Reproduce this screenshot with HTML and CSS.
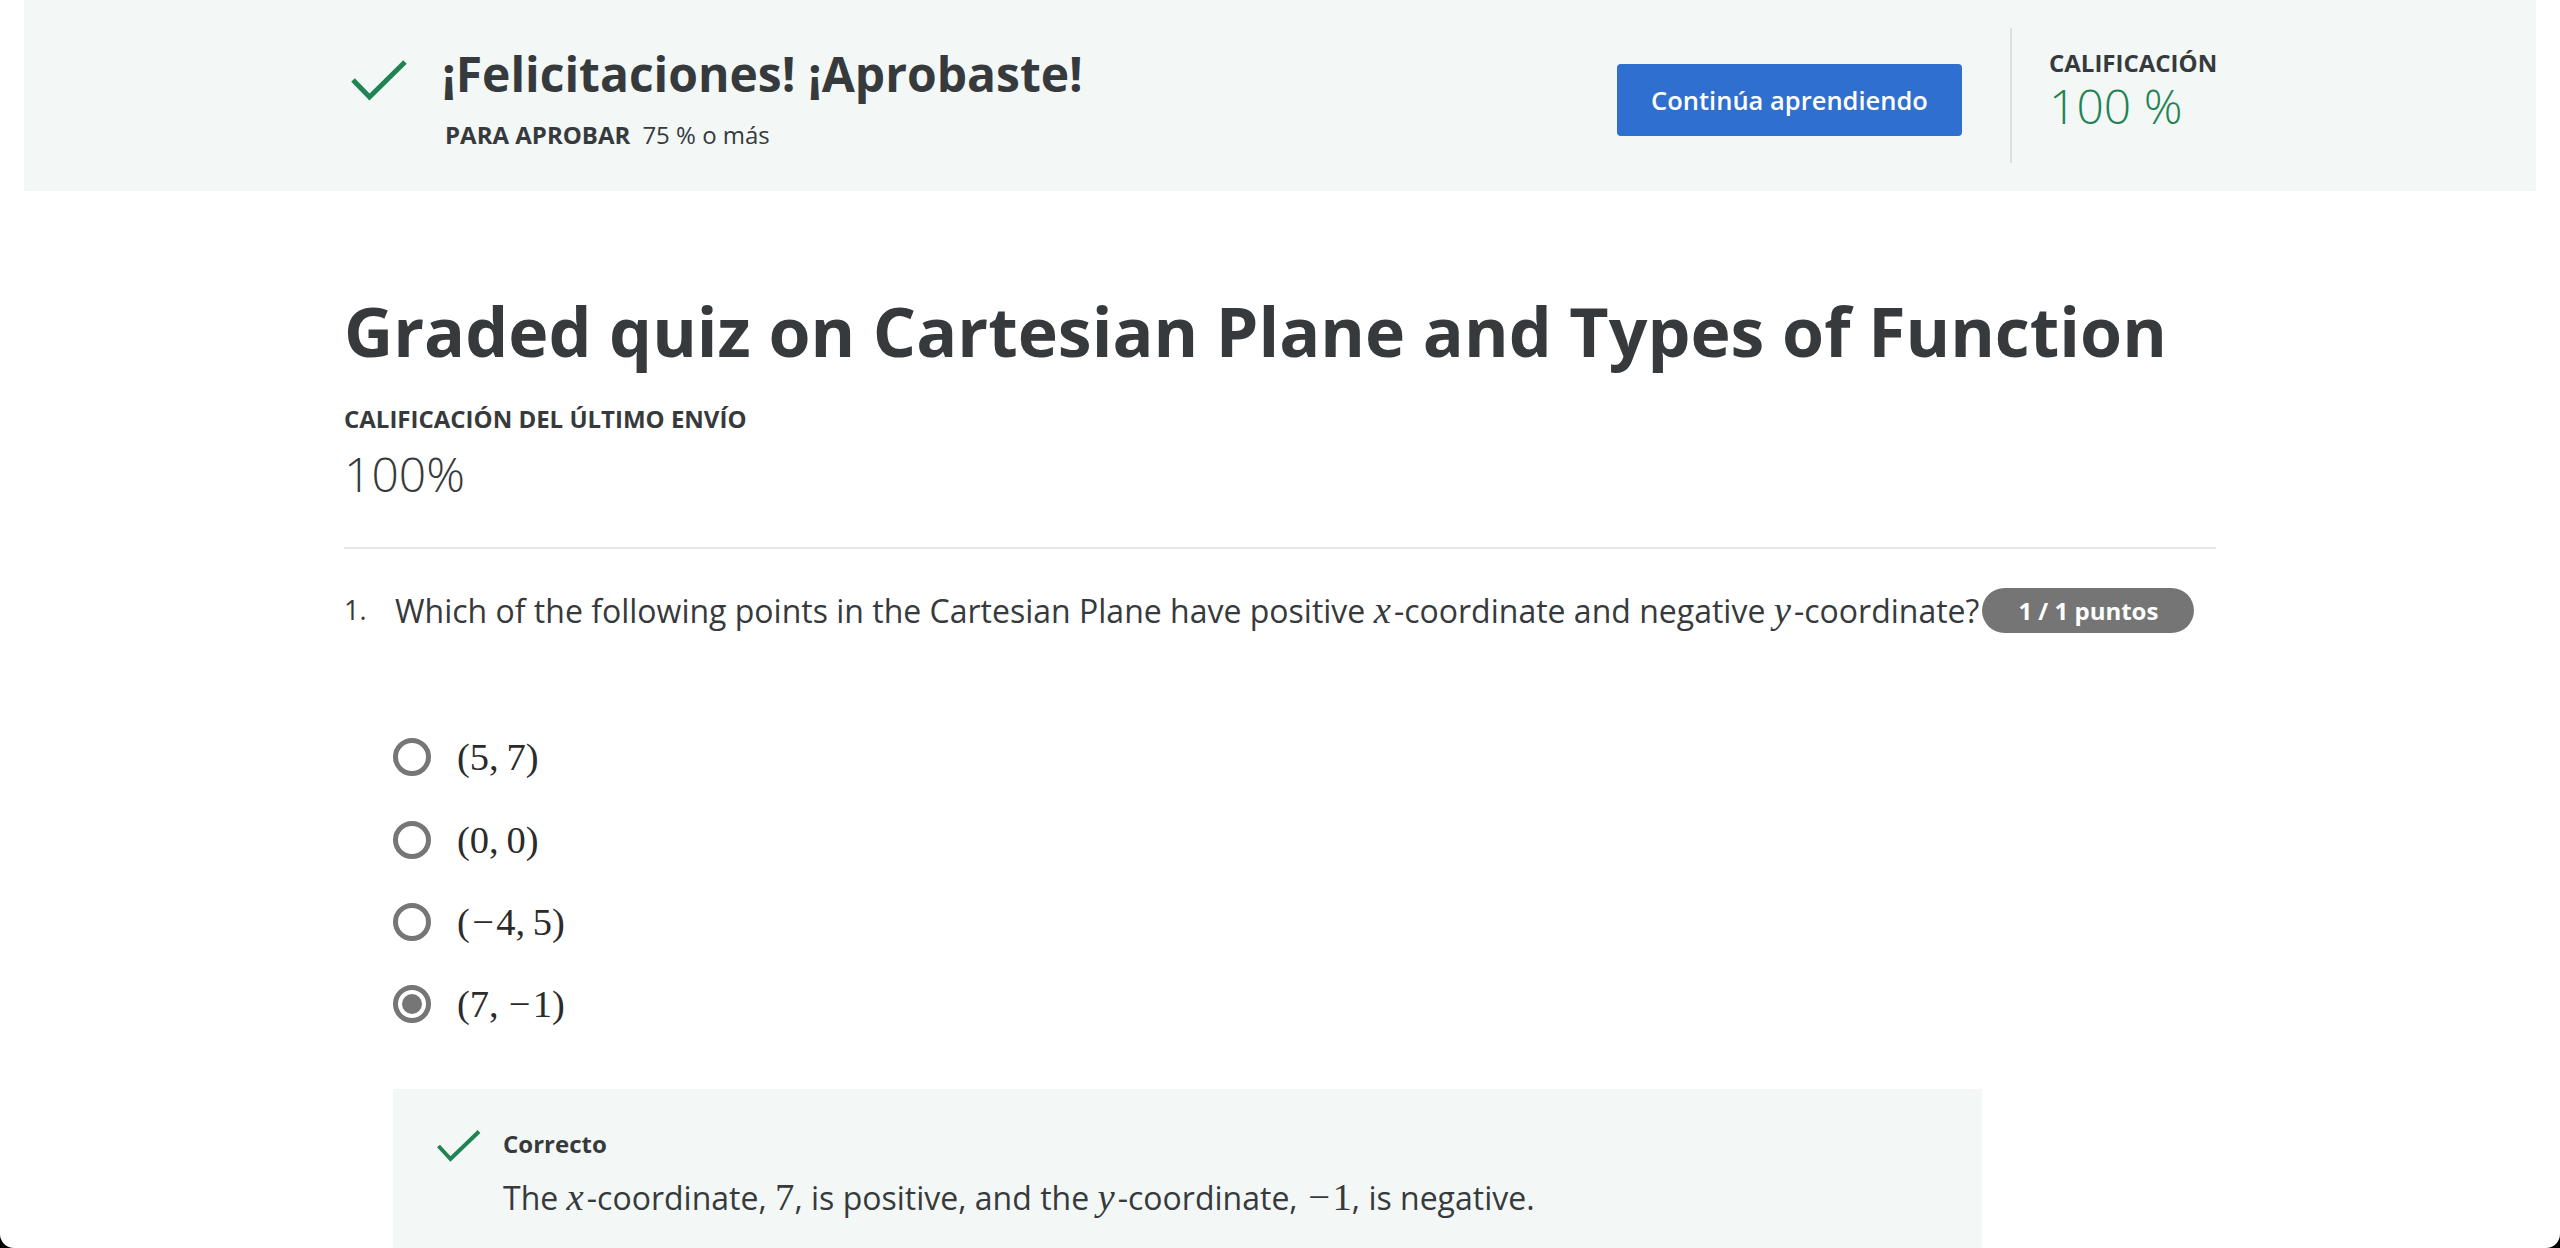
FILE: index.html
```html
<!DOCTYPE html>
<html lang="es">
<head>
<meta charset="utf-8">
<title>Graded quiz on Cartesian Plane and Types of Function</title>
<link rel="stylesheet" href="styles.css">
</head>
<body>
<div class="page">
  <header class="banner">
    <div class="banner-inner">
      <div class="pass">
        <svg class="pass-check" viewBox="0 0 56 42" width="56" height="42" aria-hidden="true">
          <polyline points="2,21 18.5,38 54,3" fill="none" stroke="#1f8354" stroke-width="5"/>
        </svg>
        <div class="pass-text">
          <h2 class="pass-title">¡Felicitaciones! ¡Aprobaste!</h2>
          <div class="pass-sub"><span class="pass-label">PARA APROBAR</span><span class="pass-value">75 % o más</span></div>
        </div>
      </div>
      <button class="btn-primary">Continúa aprendiendo</button>
      <div class="vdivider"></div>
      <div class="grade">
        <div class="grade-label">CALIFICACIÓN</div>
        <div class="grade-value">100 %</div>
      </div>
    </div>
  </header>

  <main class="main">
    <h1 class="quiz-title">Graded quiz on Cartesian Plane and Types of Function</h1>
    <div class="last-label">CALIFICACIÓN DEL ÚLTIMO ENVÍO</div>
    <div class="last-value">100%</div>
    <hr class="hdivider">

    <div class="question">
      <div class="q-num">1.</div>
      <div class="q-text">Which of the following points in the Cartesian Plane have positive <span class="mi">x</span>-coordinate and negative <span class="mi">y</span>-coordinate?</div>
      <div class="badge">1 / 1 puntos</div>
    </div>

    <div class="options">
      <div class="option"><span class="radio"></span><span class="math">(5,&thinsp;7)</span></div>
      <div class="option"><span class="radio"></span><span class="math">(0,&thinsp;0)</span></div>
      <div class="option"><span class="radio"></span><span class="math">(<span class="minus">−</span>4,&thinsp;5)</span></div>
      <div class="option"><span class="radio checked"></span><span class="math">(7,&thinsp;<span class="minus">−</span>1)</span></div>
    </div>

    <div class="feedback">
      <svg class="fb-check" viewBox="0 0 44 32" width="44" height="32" aria-hidden="true">
        <polyline points="1.5,16 13.5,29 42,1.5" fill="none" stroke="#1f8354" stroke-width="4"/>
      </svg>
      <div class="fb-body">
        <div class="fb-title">Correcto</div>
        <div class="fb-text">The <span class="mi">x</span>-coordinate, <span class="mn">7</span>, is positive, and the <span class="mi">y</span>-coordinate, <span class="mn"><span class="minus">−</span>1</span>, is negative.</div>
      </div>
    </div>
  </main>
</div>
</body>
</html>
```

FILE: styles.css
```css
html, body {
  margin: 0;
  padding: 0;
  background: #000;
}

body {
  font-family: "Open Sans", "Noto Sans", sans-serif;
  color: #373a3c;
}

.page {
  width: 2560px;
  height: 1248px;
  background: #fff;
  border-radius: 0 0 14px 14px;
  overflow: hidden;
}

/* ---------- banner ---------- */
.banner {
  margin: 0 24px;
  height: 191px;
  background: #f3f8f6;
}

.banner-inner {
  width: 1872px;
  margin: 0 auto;
  display: flex;
  align-items: flex-start;
}

.pass {
  flex: 1;
  display: flex;
  align-items: flex-start;
  padding-top: 42px;
}

.pass-check {
  margin: 17px 0 0 7px;
  flex-shrink: 0;
}

.pass-text {
  margin-left: 35px;
}

.pass-title {
  margin: 0;
  font-size: 48px;
  line-height: 64px;
  font-weight: 700;
}

.pass-sub {
  margin-top: 13px;
  font-size: 24px;
  line-height: 32px;
  padding-left: 3px;
}

.pass-label {
  font-weight: 700;
  margin-right: 12px;
}

.btn-primary {
  margin-top: 64px;
  width: 345px;
  height: 72px;
  border: none;
  border-radius: 4px;
  background: #2e6fd0;
  color: #fff;
  font-family: "Open Sans", "Noto Sans", sans-serif;
  font-size: 25.5px;
  font-weight: 600;
  padding: 0;
}

.vdivider {
  width: 2px;
  height: 135px;
  margin: 28px 0 0 48px;
  background: #dedfe0;
}

.grade {
  margin: 47px 0 0 37px;
  width: 167px;
  white-space: nowrap;
}

.grade-label {
  font-size: 24px;
  line-height: 32px;
  font-weight: 700;
}

.grade-value {
  font-size: 48px;
  line-height: 54px;
  font-weight: 300;
  color: #1f8354;
}

/* ---------- main ---------- */
.main {
  width: 1872px;
  margin: 0 auto;
}

.quiz-title {
  margin: 97px 0 0;
  font-size: 68px;
  line-height: 85px;
  font-weight: 700;
  white-space: nowrap;
}

.last-label {
  margin-top: 30px;
  font-size: 24px;
  line-height: 32px;
  font-weight: 700;
}

.last-value {
  margin-top: 11px;
  font-size: 48px;
  line-height: 56px;
  font-weight: 300;
}

.hdivider {
  margin: 45px 0 0;
  border: none;
  height: 2px;
  background: #e5e7e8;
}

.question {
  margin-top: 38px;
  display: flex;
  align-items: flex-start;
}

.q-num {
  width: 51px;
  flex-shrink: 0;
  font-size: 27px;
  line-height: 46px;
}

.q-text {
  font-size: 32px;
  line-height: 48px;
  white-space: nowrap;
}

.q-text .mi,
.fb-text .mi {
  padding-right: 0.08em;
}

.badge {
  flex-shrink: 0;
  margin: 1px 0 0 3px;
  height: 45px;
  line-height: 45px;
  padding: 0 36px;
  border-radius: 23px;
  background: #757575;
  color: #fff;
  font-size: 24px;
  font-weight: 700;
  white-space: nowrap;
}

.mi {
  font-family: "Liberation Serif", "DejaVu Serif", serif;
  font-style: italic;
  font-size: 1.21em;
  line-height: 1;
}

.mn {
  font-family: "Liberation Serif", "DejaVu Serif", serif;
  font-size: 1.21em;
  line-height: 1;
}

.minus {
  margin: 0 0.06em;
}

.options {
  margin-top: 81px;
  padding-left: 49px;
}

.option {
  height: 82.4px;
  display: flex;
  align-items: center;
}

.radio {
  width: 38px;
  height: 38px;
  box-sizing: border-box;
  border: 5px solid #767676;
  border-radius: 50%;
  display: flex;
  align-items: center;
  justify-content: center;
  flex-shrink: 0;
}

.radio.checked::after {
  content: "";
  width: 20px;
  height: 20px;
  border-radius: 50%;
  background: #767676;
}

.math {
  margin-left: 26px;
  font-family: "Liberation Serif", "DejaVu Serif", serif;
  font-size: 38.5px;
  line-height: 44px;
  color: #2b2b2b;
}

.feedback {
  margin-top: 43.6px;
  margin-left: 49px;
  width: 1589px;
  box-sizing: border-box;
  background: #f3f8f6;
  padding: 38.7px 44px 60px;
  display: flex;
  align-items: flex-start;
}

.fb-check {
  flex-shrink: 0;
  margin-top: 2px;
}

.fb-body {
  margin-left: 22px;
}

.fb-title {
  font-size: 24px;
  line-height: 32px;
  font-weight: 700;
}

.fb-text {
  margin-top: 14px;
  font-size: 32px;
  line-height: 48px;
}
```
